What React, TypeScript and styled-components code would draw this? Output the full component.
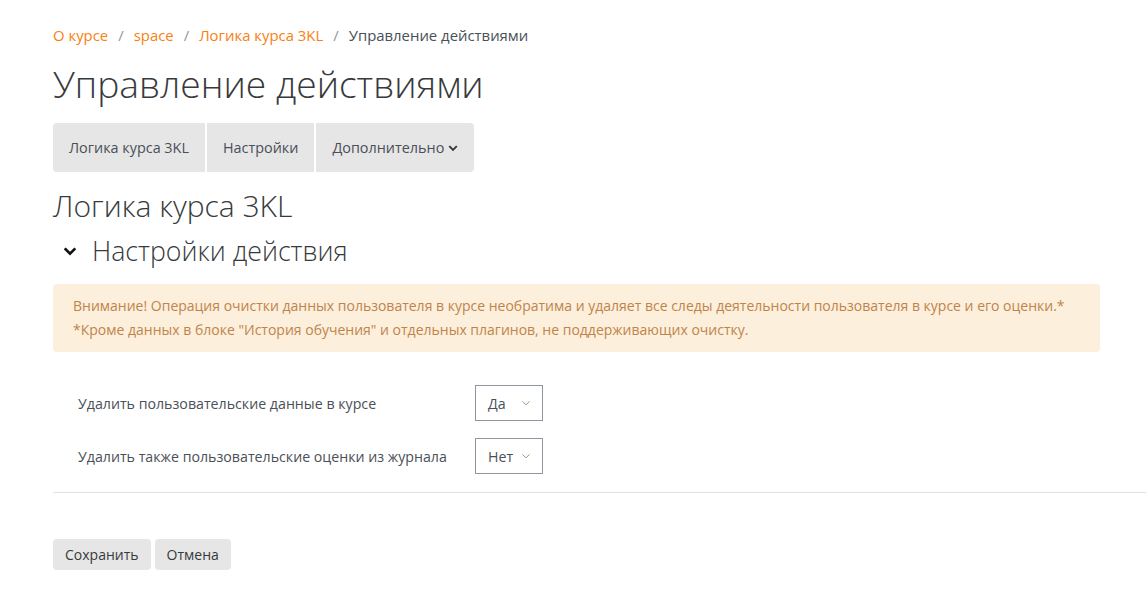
import React from 'react';
import styled, { createGlobalStyle } from 'styled-components';

const GlobalStyle = createGlobalStyle`
	body {
		margin: 0;
		background: #fff;
		font-family: 'Open Sans', 'Noto Sans', sans-serif;
		color: #373a3c;
	}
`;

const Page = styled.div`
	padding: 23px 0 24px 53px;
`;

const Breadcrumb = styled.nav`
	display: flex;
	align-items: center;
	font-size: 14.9px;
	height: 24px;
	color: #495057;
`;

const Crumb = styled.a`
	color: #f98012;
	text-decoration: none;
`;

const Sep = styled.span`
	color: #8f959e;
	padding: 0 10px;
`;

const Title = styled.h1`
	margin: 13px 0 15px;
	font-size: 37.2px;
	font-weight: 300;
	line-height: 48px;
	color: #373a3c;
`;

const Tabs = styled.div`
	display: inline-flex;
	background: #e6e6e6;
	border-radius: 4px;
	height: 49px;
	overflow: hidden;
`;

const Tab = styled.div`
	display: flex;
	align-items: center;
	gap: 4px;
	padding: 0 16px;
	font-size: 14.4px;
	color: #4a4f58;
	& + & {
		border-left: 2px solid #fff;
	}
`;

const Content = styled.div`
	padding-right: 46px;
`;

const Heading = styled.h2`
	margin: 16px 0 0;
	font-size: 30px;
	font-weight: 300;
	line-height: 36px;
`;

const Legend = styled.div`
	display: flex;
	align-items: center;
	gap: 15px;
	margin: 9px 0 15px 10px;
	font-size: 26.7px;
	font-weight: 300;
	line-height: 36px;
`;

const Alert = styled.div`
	background: #fcefdc;
	color: #c0844a;
	border-radius: 4px;
	padding: 10px 20px;
	font-size: 14px;
	line-height: 24px;
`;

const Form = styled.div`
	padding: 33px 0 0 25px;
	display: grid;
	grid-template-columns: 397px auto;
	row-gap: 17px;
	align-items: center;
	justify-items: start;
`;

const Label = styled.label`
	font-size: 14.2px;
	color: #4a4f58;
`;

const Select = styled.div`
	display: flex;
	align-items: center;
	justify-content: space-between;
	width: 68px;
	height: 36px;
	box-sizing: border-box;
	padding: 0 11px 0 12px;
	border: 1px solid #8f959e;
	font-size: 14.2px;
	color: #4a4f58;
`;

const Rule = styled.hr`
	margin: 18px 0 0;
	border: 0;
	border-top: 1px solid #dee2e6;
`;

const Actions = styled.div`
	display: flex;
	gap: 4px;
	margin-top: 46px;
`;

const Button = styled.button`
	background: #e6e6e6;
	border: 0;
	border-radius: 4px;
	height: 31px;
	padding: 0 12px;
	font-family: inherit;
	font-size: 14px;
	color: #373a3c;
`;

const Chevron = ({ size, stroke, color }: { size: number; stroke: number; color: string }) => (
	<svg width={size} height={size} viewBox="0 0 16 16" fill="none">
		<path d="M3 6l5 5 5-5" stroke={color} strokeWidth={stroke} strokeLinecap="square" />
	</svg>
);

const App = () => (
	<>
		<GlobalStyle />
		<Page>
			<Breadcrumb>
				<Crumb href="#">О курсе</Crumb>
				<Sep>/</Sep>
				<Crumb href="#">space</Crumb>
				<Sep>/</Sep>
				<Crumb href="#">Логика курса 3KL</Crumb>
				<Sep>/</Sep>
				<span>Управление действиями</span>
			</Breadcrumb>
			<Title>Управление действиями</Title>
			<Tabs>
				<Tab>Логика курса 3KL</Tab>
				<Tab>Настройки</Tab>
				<Tab>
					Дополнительно <Chevron size={10} stroke={3} color="#373a3c" />
				</Tab>
			</Tabs>
			<Content>
				<Heading>Логика курса 3KL</Heading>
				<Legend>
					<Chevron size={14} stroke={3} color="#111" />
					Настройки действия
				</Legend>
				<Alert>
					Внимание! Операция очистки данных пользователя в курсе необратима и удаляет все следы деятельности
					пользователя в курсе и его оценки.*
					<br />
					*Кроме данных в блоке "История обучения" и отдельных плагинов, не поддерживающих очистку.
				</Alert>
				<Form>
					<Label>Удалить пользовательские данные в курсе</Label>
					<Select>
						Да <Chevron size={10} stroke={1.2} color="#6a737b" />
					</Select>
					<Label>Удалить также пользовательские оценки из журнала</Label>
					<Select>
						Нет <Chevron size={10} stroke={1.2} color="#6a737b" />
					</Select>
				</Form>
			</Content>
			<Rule />
			<Actions>
				<Button>Сохранить</Button>
				<Button>Отмена</Button>
			</Actions>
		</Page>
	</>
);

export default App;
